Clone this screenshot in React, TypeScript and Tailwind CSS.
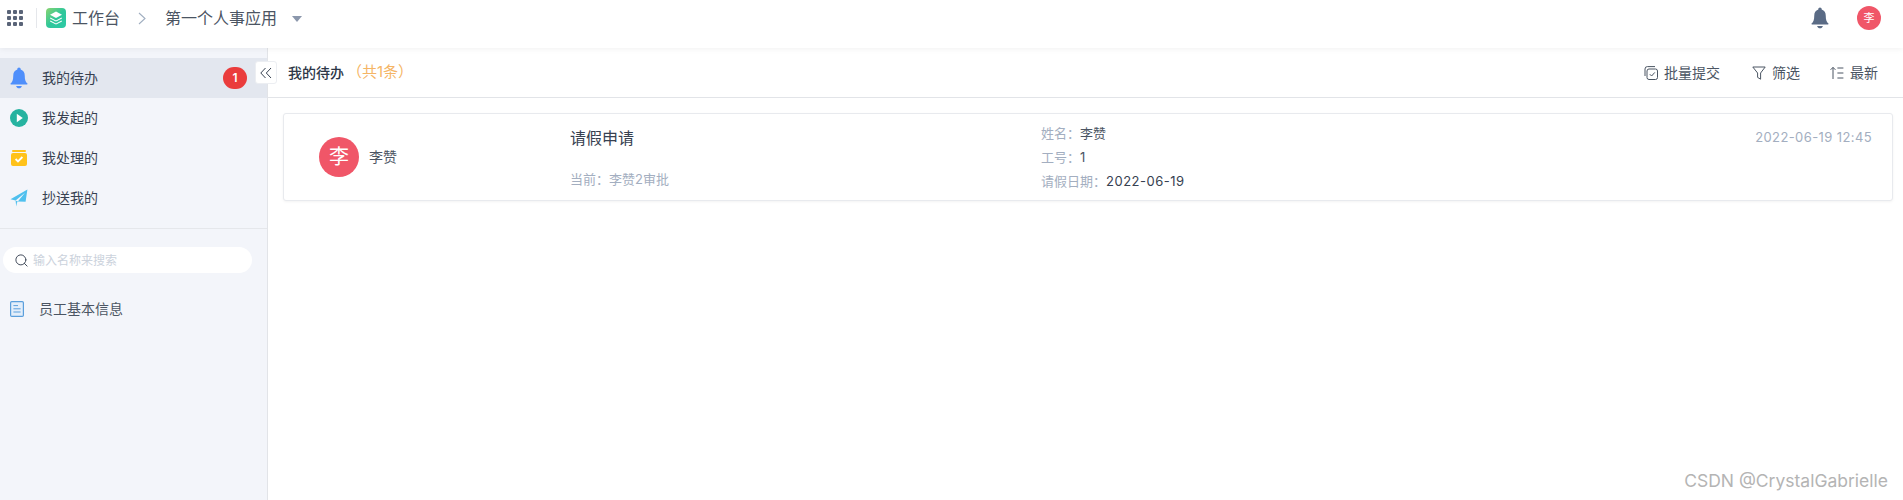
import { Search } from 'lucide-react';

const font = "font-['Inter','Noto_Sans_CJK_SC',sans-serif]";

function GridIcon() {
  const cells = [0, 1, 2, 3, 4, 5, 6, 7, 8];
  return (
    <div className="grid grid-cols-3 gap-[2px] w-[16px]">
      {cells.map((c) => (
        <span key={c} className="w-[4px] h-[4px] rounded-[1px] bg-[#5a6478]" />
      ))}
    </div>
  );
}

function LogoIcon() {
  return (
    <svg width="20" height="20" viewBox="0 0 20 20">
      <defs>
        <linearGradient id="lg" x1="0" y1="0" x2="1" y2="1">
          <stop offset="0" stopColor="#8bd46f" />
          <stop offset="0.5" stopColor="#2fc79a" />
          <stop offset="1" stopColor="#2cc9a6" />
        </linearGradient>
      </defs>
      <rect width="20" height="20" rx="4" fill="url(#lg)" />
      <path d="M10 3.5 L16 6.8 L10 10 L4 6.8 Z" fill="#fff" />
      <path d="M4.4 9.4 L10 12.4 L15.6 9.4 L16 10.4 L10 13.6 L4 10.4 Z" fill="#fff" />
      <path d="M4.4 12.4 L10 15.4 L15.6 12.4 L16 13.4 L10 16.6 L4 13.4 Z" fill="#fff" />
    </svg>
  );
}

function BellIcon({ color, size }: { color: string; size: number }) {
  return (
    <svg className="shrink-0" width={size} height={size} viewBox="0 0 20 20" fill={color}>
      <path d="M10 1.2c.8 0 1.4.6 1.4 1.3v.5c2.3.7 3.4 2.6 3.4 5.2 0 3.3.6 5.1 2.2 6.4.3.3.1.8-.3.8H3.3c-.4 0-.6-.5-.3-.8 1.6-1.3 2.2-3.1 2.2-6.4 0-2.6 1.1-4.5 3.4-5.2v-.5c0-.7.6-1.3 1.4-1.3z" />
      <path d="M7.6 16.6h4.8c-.3 1.2-1.3 2-2.4 2s-2.1-.8-2.4-2z" />
    </svg>
  );
}

function PlayIcon() {
  return (
    <svg width="18" height="18" viewBox="0 0 18 18">
      <circle cx="9" cy="9" r="9" fill="#26b3a0" />
      <path d="M6.8 4.8 L12.8 9 L6.8 13.2 Z" fill="#fff" />
    </svg>
  );
}

function InboxIcon() {
  return (
    <svg width="18" height="18" viewBox="0 0 18 18">
      <rect x="2" y="1" width="14" height="2" rx="1" fill="#ffc21a" />
      <rect x="1" y="4" width="16" height="13" rx="2" fill="#ffc21a" />
      <path d="M5.6 10 L8 12.4 L12.4 8" fill="none" stroke="#fff" strokeWidth="1.8" />
    </svg>
  );
}

function SendIcon() {
  return (
    <svg width="18" height="18" viewBox="0 0 18 18">
      <path d="M17.4 0.5 L0.5 10.2 L5.6 11.6 L15 3.8 L7.8 12.4 L8 12.6 L15.6 12.8 Z" fill="#4fc0ee" />
      <path d="M5.6 11.6 L7.8 12.4 L8 12.6 L7 13.6 L6.2 17.4 Z" fill="#4fc0ee" />
    </svg>
  );
}

function DocIcon() {
  return (
    <svg width="14" height="16" viewBox="0 0 14 16" fill="none">
      <rect x="0.6" y="0.6" width="12.8" height="14.8" rx="1.2" fill="#e3eefa" stroke="#5b9fdc" strokeWidth="1.2" />
      <path d="M3.4 4.6 H8 M3.4 7.8 H10.6 M3.4 11 H10.6" stroke="#5b9fdc" strokeWidth="1" />
    </svg>
  );
}

function BatchIcon() {
  return (
    <svg width="14" height="14" viewBox="0 0 14 14" fill="none" stroke="#4b5563" strokeWidth="1">
      <rect x="3" y="3" width="10.5" height="10.5" rx="2" />
      <path d="M1 10 V3 a2.4 2.4 0 0 1 2.4 -2.4 H11" />
      <path d="M5.8 8.2 L7.6 10 L10.8 6.4" />
    </svg>
  );
}

function FilterIcon() {
  return (
    <svg width="14" height="14" viewBox="0 0 14 14" fill="none" stroke="#4b5563" strokeWidth="1">
      <path d="M0.8 1 H13.2 L8.6 7 V13.2 L5.6 11.4 V7 Z" strokeLinejoin="round" />
    </svg>
  );
}

function SortIcon() {
  return (
    <svg width="14" height="14" viewBox="0 0 14 14" fill="none" stroke="#4b5563" strokeWidth="1">
      <path d="M3 13 V1.4 M0.6 3.8 L3 1.4 L5.4 3.8" />
      <path d="M7.4 2 H13.4 M7.4 7 H13.4 M7.4 12 H13.4" />
    </svg>
  );
}

function Header() {
  return (
    <header className="relative z-10 flex justify-between h-[48px] bg-white shadow-[0_1px_6px_rgba(0,0,0,0.06)]">
      <div className="flex items-center h-[36px]">
        <div className="ml-[7px]">
          <GridIcon />
        </div>
        <span className="ml-[13px] w-px h-[20px] bg-[#e5e7eb]" />
        <div className="ml-[9px]">
          <LogoIcon />
        </div>
        <span className="ml-[6px] text-[16px] text-[#4b5563]">工作台</span>
        <svg className="ml-[18px]" width="8" height="13" viewBox="0 0 8 13" fill="none" stroke="#a0aec0" strokeWidth="1.1">
          <path d="M1 1 L7 6.5 L1 12" />
        </svg>
        <span className="ml-[19px] text-[16px] text-[#4b5563]">第一个人事应用</span>
        <span className="ml-[15px] mt-[2px] w-0 h-0 border-x-[5px] border-x-transparent border-t-[6px] border-t-[#8b97ac]" />
      </div>
      <div className="flex items-center h-[36px]">
        <BellIcon color="#5a6b85" size={24} />
        <span className="ml-[25px] mr-[22px] flex items-center justify-center w-[24px] h-[24px] rounded-full bg-[#f05668] text-[11px] text-white">
          李
        </span>
      </div>
    </header>
  );
}

function NavItem({ icon, label, active, badge }: { icon: React.ReactNode; label: string; active?: boolean; badge?: number }) {
  return (
    <div className={`flex items-center h-[40px] pl-[10px] ${active ? 'bg-[#e3e7ef]' : ''}`}>
      <span className="flex items-center justify-center w-[18px]">{icon}</span>
      <span className="ml-[14px] pb-[2px] text-[14px] text-[#374151]">{label}</span>
      {badge ? (
        <span className="ml-auto mr-[20px] flex items-center justify-center w-[24px] h-[22px] rounded-full bg-[#ea3c3c] text-[12px] font-semibold text-white">
          {badge}
        </span>
      ) : null}
    </div>
  );
}

function Sidebar() {
  return (
    <aside className="relative shrink-0 w-[268px] bg-[#f3f5fa] border-r border-[#e2e4e8] pt-[10px]">
      <NavItem icon={<BellIcon color="#4f8ffb" size={24} />} label="我的待办" active badge={1} />
      <NavItem icon={<PlayIcon />} label="我发起的" />
      <NavItem icon={<InboxIcon />} label="我处理的" />
      <NavItem icon={<SendIcon />} label="抄送我的" />
      <div className="mt-[10px] h-px bg-[#e5e7eb]" />
      <div className="mt-[18px] ml-[3px] flex items-center w-[249px] h-[26px] rounded-full bg-white pl-[11px]">
        <Search size={15} color="#374151" strokeWidth={1.5} />
        <span className="ml-[4px] pt-[1px] text-[12px] text-[#cbd2dc]">输入名称来搜索</span>
      </div>
      <div className="mt-[23px] flex items-center h-[26px] pl-[10px]">
        <DocIcon />
        <span className="ml-[15px] pb-[2px] text-[14px] text-[#4b5563]">员工基本信息</span>
      </div>
      <button className="absolute top-[13px] right-[-10px] z-10 flex items-center justify-center w-[22px] h-[23px] rounded-[3px] bg-white border border-[#eceef2]">
        <svg width="12" height="12" viewBox="0 0 12 12" fill="none" stroke="#374151" strokeWidth="1">
          <path d="M5.5 1 L0.8 6 L5.5 11 M11 1 L6.3 6 L11 11" />
        </svg>
      </button>
    </aside>
  );
}

function Tool({ icon, label, className }: { icon: React.ReactNode; label: string; className?: string }) {
  return (
    <span className={`flex items-center gap-[6px] text-[14px] text-[#4b5563] ${className ?? ''}`}>
      {icon}
      {label}
    </span>
  );
}

function TaskCard() {
  return (
    <div className="mt-[15px] ml-[15px] mr-[10px] flex h-[88px] bg-white border border-[#e8eaee] rounded-[3px] shadow-[0_1px_3px_rgba(0,0,0,0.05)]">
      <div className="flex items-center w-[286px] pl-[35px]">
        <span className="flex items-center justify-center w-[40px] h-[40px] rounded-full bg-[#f05668] text-[20px] text-white">李</span>
        <span className="ml-[10px] pb-[2px] text-[14px] text-[#4b5563]">李赞</span>
      </div>
      <div className="flex flex-col w-[471px] pt-[12px]">
        <span className="text-[16px] leading-[24px] text-[#374151]">请假申请</span>
        <span className="mt-[20px] text-[13px] leading-[18px] text-[#a3aec0]">当前：李赞2审批</span>
      </div>
      <div className="flex flex-col flex-1 pt-[7px] text-[13px] leading-[24px] text-[#a3aec0]">
        <span>
          姓名：<span className="text-[#4b5563]">李赞</span>
        </span>
        <span>
          工号：<span className="text-[#4b5563]">1</span>
        </span>
        <span>
          请假日期：<span className="text-[#374151] tracking-[0.5px]">2022-06-19</span>
        </span>
      </div>
      <div className="pt-[13px] pr-[20px] text-[13px] leading-[20px] tracking-[0.4px] text-[#a3aec0]">2022-06-19 12:45</div>
    </div>
  );
}

export default function App() {
  return (
    <div className={`relative flex flex-col h-[500px] overflow-hidden bg-white ${font}`}>
      <Header />
      <div className="flex flex-1">
        <Sidebar />
        <main className="flex-1">
          <div className="flex items-center justify-between h-[50px] pl-[20px] pr-[25px] border-b border-[#e2e4e8]">
            <div className="flex items-center">
              <span className="text-[14px] font-medium text-[#2d3748]">我的待办</span>
              <span className="ml-[3px] text-[15px] text-[#f5b565]">（共1条）</span>
            </div>
            <div className="flex items-center gap-[30px]">
              <Tool icon={<BatchIcon />} label="批量提交" className="mr-[2px]" />
              <Tool icon={<FilterIcon />} label="筛选" />
              <Tool icon={<SortIcon />} label="最新" />
            </div>
          </div>
          <TaskCard />
        </main>
      </div>
      <span className="absolute right-[15px] bottom-[8px] text-[17.5px] leading-[22px] text-[#b4b4b4]">CSDN @CrystalGabrielle</span>
    </div>
  );
}
